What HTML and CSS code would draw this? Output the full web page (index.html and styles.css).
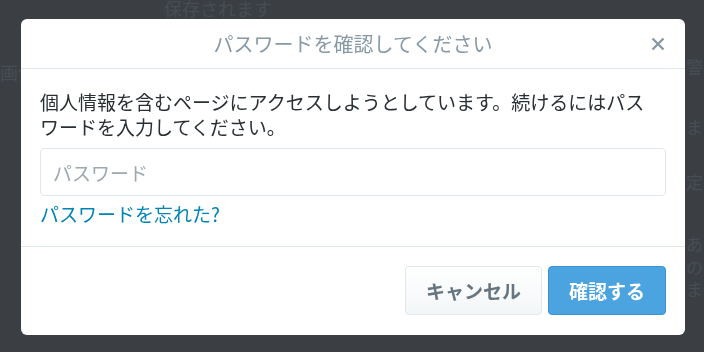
FILE: index.html
```html
<!DOCTYPE html>
<html lang="ja">
<head>
<meta charset="utf-8">
<title>パスワードを確認してください</title>
<link rel="stylesheet" href="styles.css">
</head>
<body>
<div class="page">
  <div class="page-top">保存されます</div>
  <div class="page-row">
    <div class="page-left">画像</div>
    <div class="page-right">
      <p class="pr pr-1">警</p>
      <p class="pr pr-2">ま</p>
      <p class="pr pr-3">定</p>
      <p class="pr pr-4">あ</p>
      <p class="pr pr-5">の</p>
      <p class="pr pr-6">ま</p>
    </div>
  </div>
</div>

<div class="overlay">
  <div class="dialog" role="dialog">
    <div class="dialog-header">
      <span></span>
      <h3 class="dialog-title">パスワードを確認してください</h3>
      <button class="close" aria-label="閉じる">
        <svg width="14" height="14" viewBox="0 0 14 14"><path d="M1.5 1.5 L12.5 12.5 M12.5 1.5 L1.5 12.5" stroke="#8899a6" stroke-width="2.4" fill="none"/></svg>
      </button>
    </div>
    <div class="dialog-body">
      <p class="message">個人情報を含むページにアクセスしようとしています。続けるにはパスワードを入力してください。</p>
      <input class="password" type="password" placeholder="パスワード">
      <a class="forgot" href="#">パスワードを忘れた?</a>
    </div>
    <div class="dialog-footer">
      <button class="btn btn-cancel">キャンセル</button>
      <button class="btn btn-primary">確認する</button>
    </div>
  </div>
</div>
</body>
</html>
```

FILE: styles.css
```css
html, body {
  margin: 0;
  padding: 0;
}
body {
  width: 704px;
  height: 352px;
  overflow: hidden;
  background: #3b3f44;
  font-family: "Noto Sans CJK JP", "Noto Sans", sans-serif;
}

/* background page (dimmed) */
.page {
  color: #484d53;
  font-size: 18px;
  line-height: 20px;
}
.page-top {
  padding-left: 164px;
  line-height: 17px;
  white-space: nowrap;
}
.page-row {
  display: flex;
  justify-content: space-between;
}
.page-left {
  margin-top: 45px;
  white-space: nowrap;
  width: 60px;
}
.page-right {
  width: 18px;
  white-space: nowrap;
}
.pr { margin: 0; line-height: 22px; font-size: 17px; }
.pr-1 { margin-top: 39px; }
.pr-2 { margin-top: 38px; }
.pr-3 { margin-top: 33px; }
.pr-4 { margin-top: 40px; }
.pr-5 { margin-top: 1px; }
.pr-6 { margin-top: 0; }

/* modal */
.overlay {
  position: fixed;
  inset: 0;
  padding: 19px 0 0 21px;
}
.dialog {
  width: 664px;
  background: #fff;
  border-radius: 6px;
  overflow: hidden;
  color: #292f33;
}
.dialog-header {
  height: 49px;
  display: grid;
  grid-template-columns: 1fr auto 1fr;
  align-items: center;
  border-bottom: 1px solid #e1e8ed;
}
.dialog-title {
  margin: 0;
  font-size: 20px;
  font-weight: 400;
  line-height: 26px;
  color: #8899a6;
  padding-top: 1px;
}
.close {
  justify-self: end;
  margin-right: 20px;
  padding: 0;
  border: 0;
  background: none;
  width: 14px;
  height: 14px;
  display: flex;
}
.dialog-body {
  padding: 20px 20px 20px 19px;
  border-bottom: 1px solid #e1e8ed;
  display: flex;
  flex-direction: column;
  align-items: flex-start;
}
.message {
  margin: 0;
  width: 620px;
  font-size: 19px;
  line-height: 25px;
}
.password {
  box-sizing: border-box;
  margin-top: 9px;
  width: 626px;
  height: 48px;
  border: 1px solid #e1e8ed;
  border-radius: 4px;
  padding: 0 12px;
  font-family: inherit;
  font-size: 19px;
  color: #292f33;
  outline: none;
}
.password::placeholder {
  color: #9ea8b0;
}
.forgot {
  margin-top: 5px;
  font-size: 19px;
  line-height: 25px;
  color: #0084b4;
  text-decoration: none;
}
.dialog-footer {
  display: flex;
  justify-content: flex-end;
  gap: 6px;
  padding: 19px 19px 20px 0;
}
.btn {
  font-family: inherit;
  font-size: 19px;
  font-weight: 700;
  line-height: 25px;
  padding: 11px 20px;
  border-radius: 4px;
  cursor: pointer;
}
.btn-cancel {
  background: linear-gradient(#fff, #f3f6f8);
  border: 1px solid #e1e8ed;
  color: #66757f;
}
.btn-primary {
  background: #4ba3df;
  border: 1px solid #3b93d3;
  color: #fff;
}
```
